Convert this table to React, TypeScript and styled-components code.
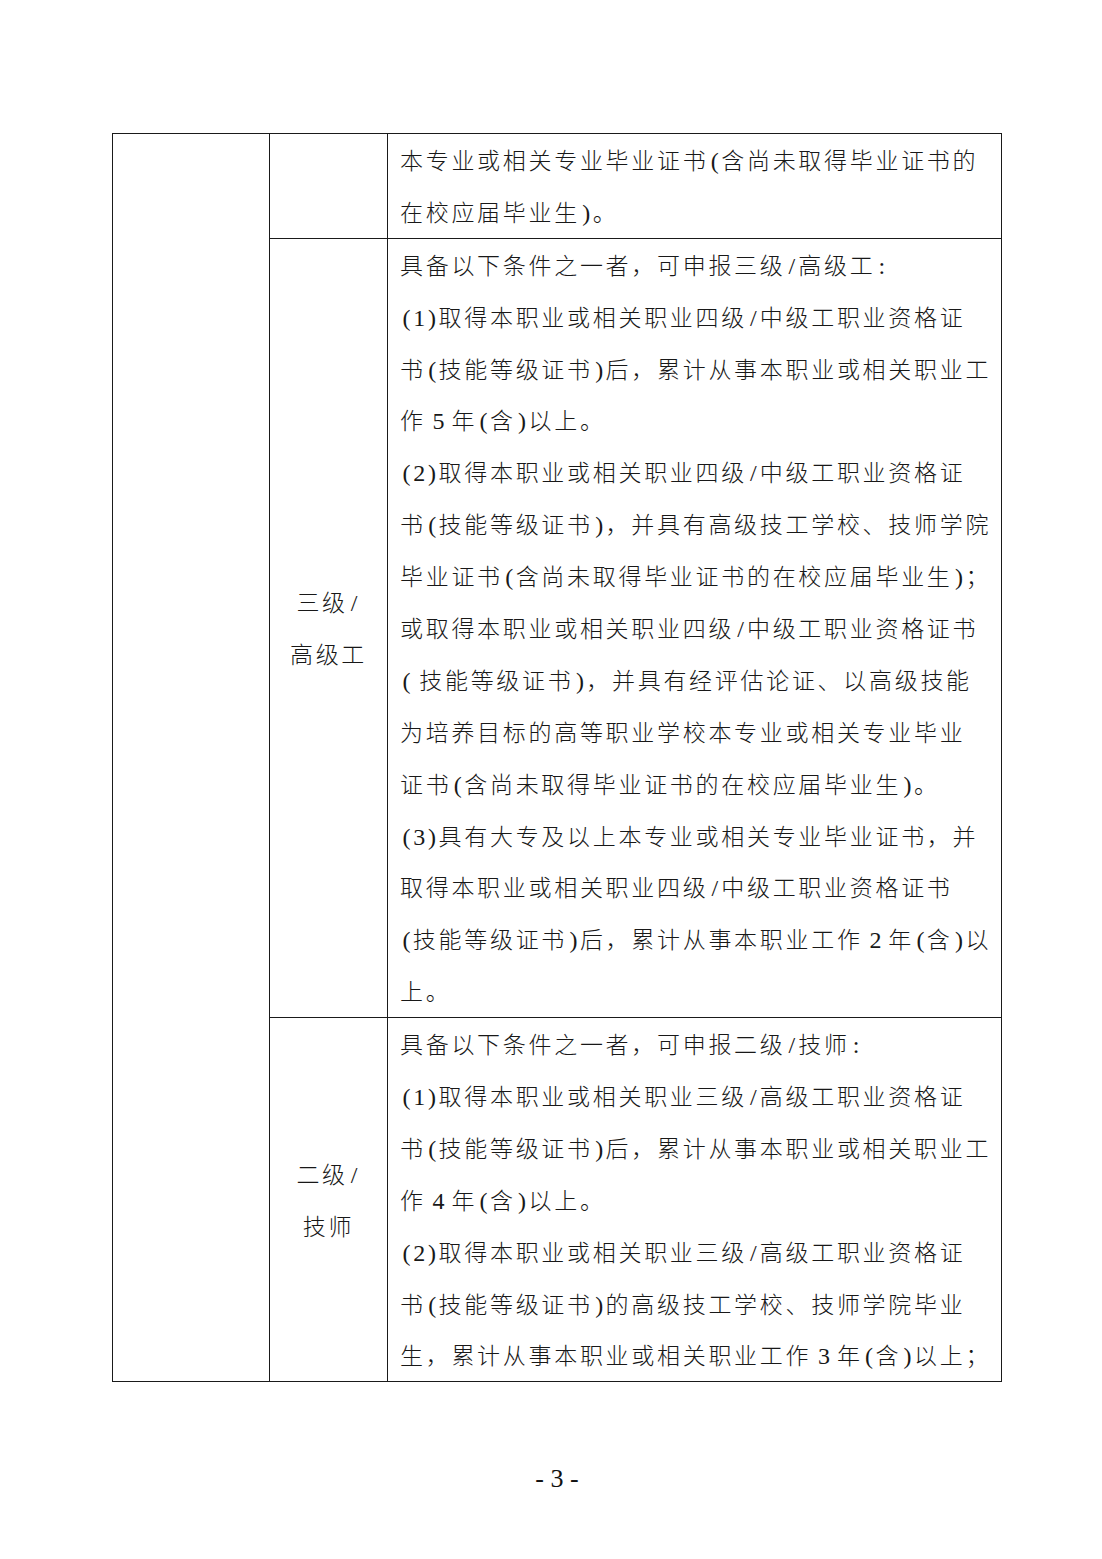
import React from "react";
import styled, { createGlobalStyle } from "styled-components";

const GlobalStyle = createGlobalStyle`
  html, body { margin: 0; padding: 0; background: #fff; }
  body { font-family: "Noto Sans CJK SC", "Noto Sans", sans-serif; }
`;

const LINE = 51.9;
const EM = 25.7;

const Page = styled.div`
  width: 1102px;
  height: 1559px;
  box-sizing: border-box;
  padding: 133px 0 0 112px;
  display: flex;
  flex-direction: column;
  background: #fff;
`;

const Table = styled.table`
  width: 890px;
  table-layout: fixed;
  border-collapse: collapse;
  color: #181818;
  font-family: "Noto Sans CJK SC", sans-serif;
  font-weight: 300;
  font-size: 23px;
  letter-spacing: 2.7px;
`;

const Cell = styled.td<{ $center?: boolean }>`
  border: 1px solid #1a1a1a;
  padding: 0 0 0 ${(p) => (p.$center ? 0 : 12)}px;
  vertical-align: ${(p) => (p.$center ? "middle" : "top")};
  text-align: ${(p) => (p.$center ? "center" : "left")};
`;

const TextLine = styled.div`
  display: block;
  white-space: nowrap;
  height: ${LINE}px;
  line-height: ${LINE}px;
`;

const Half = styled.span`
  display: inline-block;
  width: ${EM / 2}px;
  text-align: center;
  letter-spacing: 0;
  font-family: "Liberation Serif", serif;
  font-size: 24px;
`;

const Quarter = styled.span`
  display: inline-block;
  width: ${EM / 4}px;
`;

const PageNumber = styled.div`
  width: 890px;
  margin-top: 84px;
  text-align: center;
  font-family: "Liberation Serif", serif;
  font-size: 26px;
  line-height: 26px;
  color: #111;
  white-space: pre;
`;

function Line({ text }: { text: string }) {
  const parts: React.ReactNode[] = [];
  let buf = "";
  let k = 0;
  const flush = () => {
    if (buf) {
      parts.push(<span key={k++}>{buf}</span>);
      buf = "";
    }
  };
  for (const c of text) {
    if (c.charCodeAt(0) < 128) {
      flush();
      if (c === " ") parts.push(<Quarter key={k++} />);
      else parts.push(<Half key={k++}>{c}</Half>);
    } else {
      buf += c;
    }
  }
  flush();
  return <TextLine>{parts}</TextLine>;
}

const row1 = ["本专业或相关专业毕业证书(含尚未取得毕业证书的", "在校应届毕业生)。"];

const row2 = [
  "具备以下条件之一者，可申报三级/高级工:",
  "(1)取得本职业或相关职业四级/中级工职业资格证",
  "书(技能等级证书)后，累计从事本职业或相关职业工",
  "作 5 年(含)以上。",
  "(2)取得本职业或相关职业四级/中级工职业资格证",
  "书(技能等级证书)，并具有高级技工学校、技师学院",
  "毕业证书(含尚未取得毕业证书的在校应届毕业生)；",
  "或取得本职业或相关职业四级/中级工职业资格证书",
  "( 技能等级证书)，并具有经评估论证、以高级技能",
  "为培养目标的高等职业学校本专业或相关专业毕业",
  "证书(含尚未取得毕业证书的在校应届毕业生)。",
  "(3)具有大专及以上本专业或相关专业毕业证书，并",
  "取得本职业或相关职业四级/中级工职业资格证书",
  "(技能等级证书)后，累计从事本职业工作 2 年(含)以",
  "上。",
];

const row3 = [
  "具备以下条件之一者，可申报二级/技师:",
  "(1)取得本职业或相关职业三级/高级工职业资格证",
  "书(技能等级证书)后，累计从事本职业或相关职业工",
  "作 4 年(含)以上。",
  "(2)取得本职业或相关职业三级/高级工职业资格证",
  "书(技能等级证书)的高级技工学校、技师学院毕业",
  "生，累计从事本职业或相关职业工作 3 年(含)以上；",
];

export default function App() {
  return (
    <>
      <GlobalStyle />
      <Page>
        <Table>
          <colgroup>
            <col style={{ width: 157 }} />
            <col style={{ width: 118 }} />
            <col style={{ width: 614 }} />
          </colgroup>
          <tbody>
            <tr>
              <Cell rowSpan={3} />
              <Cell $center />
              <Cell>
                {row1.map((t, i) => (
                  <Line key={i} text={t} />
                ))}
              </Cell>
            </tr>
            <tr>
              <Cell $center>
                <Line text="三级/" />
                <Line text="高级工" />
              </Cell>
              <Cell>
                {row2.map((t, i) => (
                  <Line key={i} text={t} />
                ))}
              </Cell>
            </tr>
            <tr>
              <Cell $center>
                <Line text="二级/" />
                <Line text="技师" />
              </Cell>
              <Cell>
                {row3.map((t, i) => (
                  <Line key={i} text={t} />
                ))}
              </Cell>
            </tr>
          </tbody>
        </Table>
        <PageNumber>- 3 -</PageNumber>
      </Page>
    </>
  );
}
